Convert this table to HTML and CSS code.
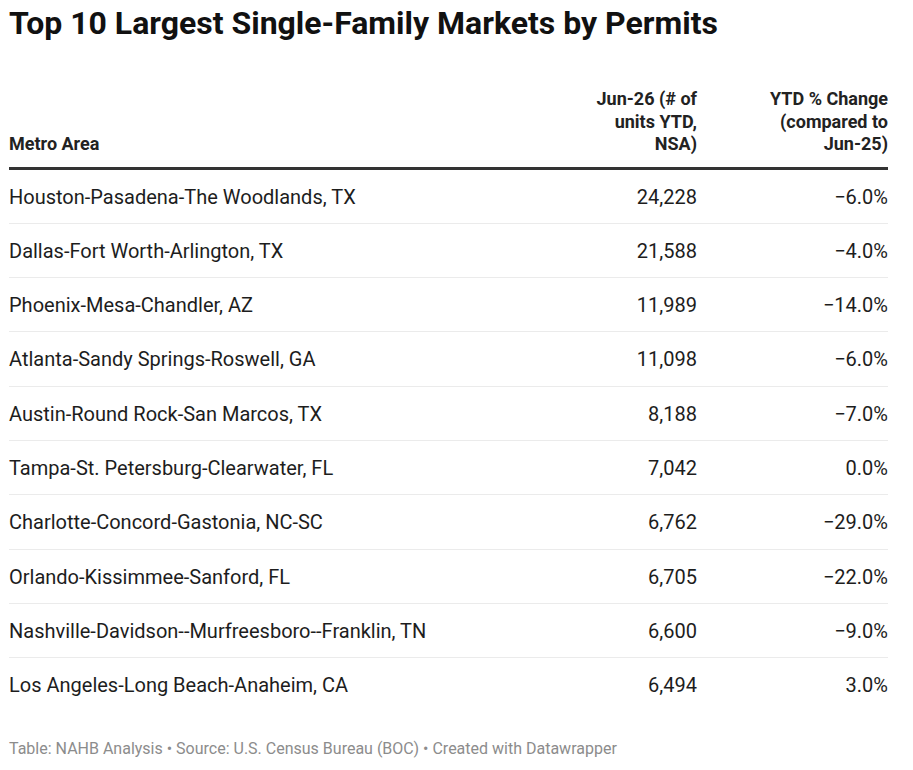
FILE: index.html
```html
<!DOCTYPE html>
<html lang="en">
<head>
<meta charset="utf-8">
<title>Top 10 Largest Single-Family Markets by Permits</title>
<link rel="stylesheet" href="styles.css">
</head>
<body>
<div class="chart">
  <h1 class="title">Top 10 Largest Single-Family Markets by Permits</h1>
  <table class="data">
    <thead>
      <tr>
        <th class="c-name">Metro Area</th>
        <th class="c-num c-units">Jun-26 (# of units YTD, NSA)</th>
        <th class="c-num c-chg">YTD % Change (compared to Jun-25)</th>
      </tr>
    </thead>
    <tbody>
      <tr><td class="c-name">Houston-Pasadena-The Woodlands, TX</td><td class="c-num">24,228</td><td class="c-num">−6.0%</td></tr>
      <tr><td class="c-name">Dallas-Fort Worth-Arlington, TX</td><td class="c-num">21,588</td><td class="c-num">−4.0%</td></tr>
      <tr><td class="c-name">Phoenix-Mesa-Chandler, AZ</td><td class="c-num">11,989</td><td class="c-num">−14.0%</td></tr>
      <tr><td class="c-name">Atlanta-Sandy Springs-Roswell, GA</td><td class="c-num">11,098</td><td class="c-num">−6.0%</td></tr>
      <tr><td class="c-name">Austin-Round Rock-San Marcos, TX</td><td class="c-num">8,188</td><td class="c-num">−7.0%</td></tr>
      <tr><td class="c-name">Tampa-St. Petersburg-Clearwater, FL</td><td class="c-num">7,042</td><td class="c-num">0.0%</td></tr>
      <tr><td class="c-name">Charlotte-Concord-Gastonia, NC-SC</td><td class="c-num">6,762</td><td class="c-num">−29.0%</td></tr>
      <tr><td class="c-name">Orlando-Kissimmee-Sanford, FL</td><td class="c-num">6,705</td><td class="c-num">−22.0%</td></tr>
      <tr><td class="c-name">Nashville-Davidson--Murfreesboro--Franklin, TN</td><td class="c-num">6,600</td><td class="c-num">−9.0%</td></tr>
      <tr class="last"><td class="c-name">Los Angeles-Long Beach-Anaheim, CA</td><td class="c-num">6,494</td><td class="c-num">3.0%</td></tr>
    </tbody>
  </table>
  <p class="footer">Table: NAHB Analysis • Source: U.S. Census Bureau (BOC) • Created with Datawrapper</p>
</div>
</body>
</html>
```

FILE: styles.css
```css
html, body {
  margin: 0;
  padding: 0;
  background: #ffffff;
}
body {
  font-family: Roboto, "Liberation Sans", Arial, sans-serif;
  color: #181818;
}
.chart {
  padding: 0 25px 0 9px;
}
.title {
  margin: 0;
  padding-top: 4px;
  font-size: 32px;
  line-height: 38px;
  font-weight: 700;
  color: #111;
}
.data {
  width: 100%;
  border-collapse: collapse;
  margin-top: 46px;
}
.data th {
  font-weight: 700;
  font-size: 18px;
  line-height: 22.5px;
  vertical-align: bottom;
  padding: 0 0 11px 0;
  border-bottom: 3px solid #333;
  color: #222;
}
.data th.c-name { text-align: left; }
.c-num { text-align: right; }
.data th.c-units { width: 125px; }
.data th.c-chg { width: 133px; padding-left: 58px; }
.data td {
  font-size: 20px;
  line-height: 24.3px;
  padding: 15px 0 14px 0;
  border-bottom: 1px solid #ebebeb;
  color: #1d1d1d;
}
.data tr.last td { border-bottom: none; }
.footer {
  margin: 28px 0 0 0;
  font-size: 16px;
  line-height: 20px;
  color: #8c8c8c;
}
```
